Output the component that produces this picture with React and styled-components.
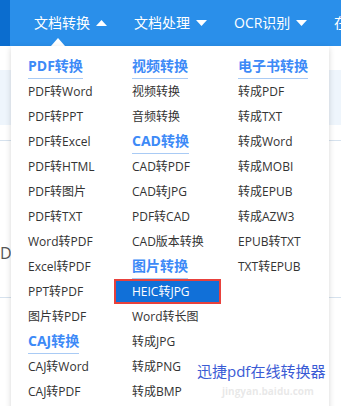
import { createGlobalStyle, styled } from "styled-components";

const columns = [
  [
    { title: "PDF转换" },
    "PDF转Word",
    "PDF转PPT",
    "PDF转Excel",
    "PDF转HTML",
    "PDF转图片",
    "PDF转TXT",
    "Word转PDF",
    "Excel转PDF",
    "PPT转PDF",
    "图片转PDF",
    { title: "CAJ转换" },
    "CAJ转Word",
    "CAJ转PDF",
  ],
  [
    { title: "视频转换" },
    "视频转换",
    "音频转换",
    { title: "CAD转换" },
    "CAD转PDF",
    "CAD转JPG",
    "PDF转CAD",
    "CAD版本转换",
    { title: "图片转换" },
    { text: "HEIC转JPG", active: true },
    "Word转长图",
    "转成JPG",
    "转成PNG",
    "转成BMP",
  ],
  [
    { title: "电子书转换" },
    "转成PDF",
    "转成TXT",
    "转成Word",
    "转成MOBI",
    "转成EPUB",
    "转成AZW3",
    "EPUB转TXT",
    "TXT转EPUB",
  ],
];

const navItems = [
  { label: "文档转换", open: true },
  { label: "文档处理" },
  { label: "OCR识别" },
  { label: "在" },
];

const Caret = ({ up }) => (
  <svg width="11" height="6" viewBox="0 0 11 6">
    <path d={up ? "M0 6 L5.5 0 L11 6 Z" : "M0 0 L11 0 L5.5 6 Z"} fill="#fff" />
  </svg>
);

const App = () => {
  return (
    <>
      <GlobalStyle />
      <Page>
        <Nav>
          <Strip />
          {navItems.map((item) => (
            <NavItem key={item.label}>
              {item.label}
              {item.label !== "在" && <Caret up={item.open} />}
            </NavItem>
          ))}
        </Nav>

        <Backdrop>
          <Banner />
          <Rule $top={15} />
          <Stray>D</Stray>
          <Rule $top={34} />
        </Backdrop>

        <Pointer />
        <Menu>
          {columns.map((col, i) => (
            <Column key={i}>
              {col.map((entry, j) => {
                if (typeof entry === "string") return <Item key={j}>{entry}</Item>;
                if (entry.title) return <Heading key={j}>{entry.title}</Heading>;
                return (
                  <Item key={j} $active={entry.active}>
                    {entry.text}
                  </Item>
                );
              })}
            </Column>
          ))}
        </Menu>

        <Caption>迅捷pdf在线转换器</Caption>
        <Watermark>jingyan.baidu.com</Watermark>
      </Page>
    </>
  );
};

export default App;

const GlobalStyle = createGlobalStyle`
  body {
    margin: 0;
    overflow: hidden;
    background: #fff;
    font-family: "Open Sans", "Noto Sans CJK SC", sans-serif;
  }
`;

const Page = styled.div`
  position: relative;
  width: 341px;
  height: 406px;
  overflow: hidden;
  background: #fff;
`;

const Nav = styled.div`
  display: flex;
  align-items: center;
  height: 46px;
  background: #2a8fea;
  overflow: hidden;
`;

const Strip = styled.div`
  align-self: stretch;
  flex: 0 0 10px;
  background: #0b6dcf;
  margin-right: 24px;
`;

const NavItem = styled.div`
  display: flex;
  align-items: center;
  gap: 6px;
  flex: 0 0 100px;
  color: #fff;
  font-size: 14px;
  line-height: 20px;
  white-space: nowrap;
`;

const Backdrop = styled.div`
  padding-top: 24px;
`;

const Banner = styled.div`
  height: 55px;
  background: #eef5fc;
`;

const Rule = styled.div`
  margin-top: ${(p) => p.$top}px;
  height: 1px;
  background: #d6e2ee;
`;

const Stray = styled.div`
  margin-top: 102px;
  font-size: 16px;
  line-height: 20px;
  color: #555;
`;

const Pointer = styled.div`
  position: absolute;
  left: 51px;
  top: 38px;
  width: 0;
  height: 0;
  border-left: 7px solid transparent;
  border-right: 7px solid transparent;
  border-bottom: 8px solid #fff;
`;

const Menu = styled.div`
  position: absolute;
  left: 11px;
  top: 46px;
  width: 318px;
  height: 380px;
  background: #fff;
  box-shadow: 0 2px 6px rgba(0, 0, 0, 0.16);
  display: grid;
  grid-template-columns: 104px 106px 1fr;
  padding: 8px 0 0 17px;
  box-sizing: border-box;
`;

const Column = styled.div`
  display: flex;
  flex-direction: column;
  align-items: flex-start;
`;

const Heading = styled.div`
  font-size: 14px;
  font-weight: bold;
  line-height: 24px;
  color: #3d8af7;
  border-bottom: 1px solid #a9cbf5;
`;

const Item = styled.div`
  box-sizing: border-box;
  height: 25px;
  line-height: ${(p) => (p.$active ? "21px" : "25px")};
  font-size: 12px;
  color: ${(p) => (p.$active ? "#fff" : "#333")};
  white-space: nowrap;
  ${(p) =>
    p.$active &&
    `
    margin-left: -18px;
    width: 107px;
    padding-left: 16px;
    background: #1170d8;
    border: 2px solid #e8413c;
  `}
`;

const Caption = styled.div`
  position: absolute;
  left: 197px;
  top: 361px;
  font-size: 15px;
  line-height: 20px;
  color: #3a5bd5;
  white-space: nowrap;
`;

const Watermark = styled.div`
  position: absolute;
  left: 222px;
  top: 384px;
  font-size: 10px;
  font-weight: bold;
  line-height: 14px;
  color: rgba(190, 190, 190, 0.35);
`;
